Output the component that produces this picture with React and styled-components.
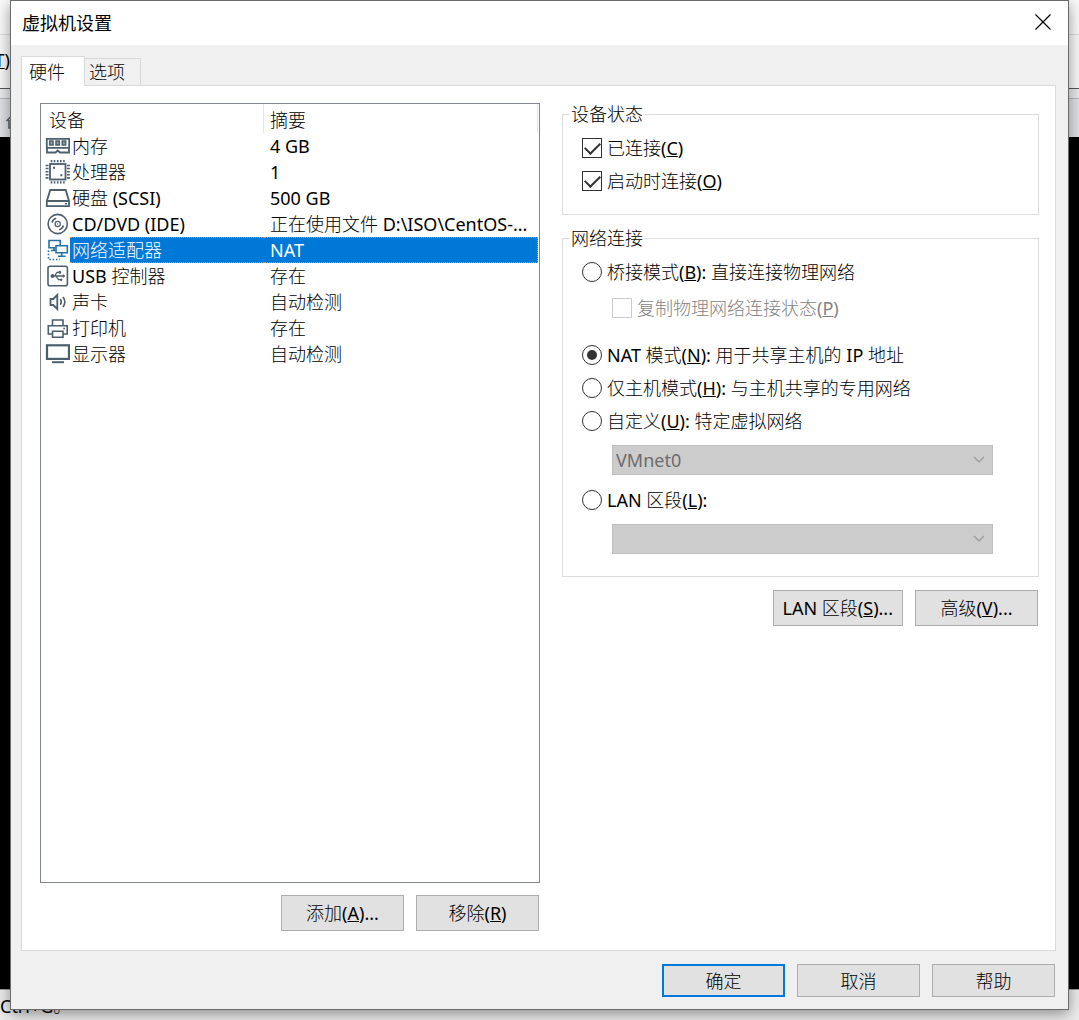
import { useState } from "react";
import styled, { createGlobalStyle, css } from "styled-components";

const GlobalStyle = createGlobalStyle`
  * {
    box-sizing: border-box;
  }

  body {
    margin: 0;
    font-family: "Noto Sans", "Noto Sans CJK SC Light", "Noto Sans CJK SC DemiLight", "Noto Sans CJK SC", sans-serif;
    font-size: 18px;
    line-height: 18px;
    color: #000000;
  }

  button, input, select {
    font: inherit;
    color: inherit;
    margin: 0;
  }
`;

const Desktop = styled.div`
  position: relative;
  min-height: 100vh;
  padding: 0 10px 10px;
  display: flex;
  overflow: hidden;
`;

/* host window that stays behind the dialog */
const HostWindow = styled.div`
  position: absolute;
  inset: 0;
  display: flex;
  flex-direction: column;
  background: #000000;
`;

const HostTitle = styled.div`
  height: 35px;
  background: #fafafa;
  border-bottom: 1px solid #dcdcdc;
`;

const HostMenu = styled.div`
  height: 54px;
  padding-bottom: 4px;
  display: flex;
  align-items: center;
  background: #f8f8f8;
  border-bottom: 1px solid #555555;
`;

const HostMenuItem = styled.span`
  width: 10px;
  display: flex;
  justify-content: flex-end;
`;

const HostToolbar = styled.div`
  height: 48px;
  background: #dfe1e4;

  svg {
    display: block;
    margin: 14px 0 0 5px;
  }

  &::before {
    content: "";
    display: block;
    height: 9px;
    background: #e9eaec;
    border-bottom: 1px solid #b4b6b9;
  }
`;

const HostScreen = styled.div`
  flex: 1;
  background: #000000;
`;

const HostStatus = styled.div`
  height: 31px;
  padding-top: 7px;
  background: #ececec;
  border-top: 1px solid #999999;
`;

const Dialog = styled.main`
  position: relative;
  flex: 1;
  min-width: 0;
  display: flex;
  flex-direction: column;
  background: #f0f0f0;
  border: 1px solid #6b6b6b;
  box-shadow: 0 4px 14px rgba(0, 0, 0, .4);
`;

const TitleBar = styled.header`
  height: 44px;
  padding: 0 13px 2px 11px;
  display: flex;
  align-items: center;
  justify-content: space-between;
  background: #ffffff;
`;

const Title = styled.h1`
  margin: 0;
  font-family: "Noto Sans CJK SC", sans-serif;
  font-size: 18px;
  font-weight: 400;
`;

const CloseButton = styled.button`
  width: 24px;
  height: 24px;
  padding: 0;
  display: flex;
  align-items: center;
  justify-content: center;
  border: none;
  background: none;
`;

const Content = styled.div`
  flex: 1;
  padding: 11px 12px 12px 10px;
  display: flex;
  flex-direction: column;
`;

const Tabs = styled.div`
  display: flex;
  align-items: flex-end;
`;

const Tab = styled.button`
  height: 27px;
  padding: 0 15px 0 4px;
  border: 1px solid #d9d9d9;
  border-bottom: none;
  border-left: none;
  background: #f0f0f0;

  ${({ $active }) => $active && css`
    position: relative;
    height: 30px;
    padding: 0 19px 0 7px;
    margin-bottom: -1px;
    border-left: 1px solid #d9d9d9;
    background: #ffffff;
  `}
`;

const Panel = styled.section`
  flex: 1;
  padding: 17px 16px 19px 18px;
  display: grid;
  grid-template-columns: minmax(0, 500fr) minmax(0, 477fr);
  gap: 22px;
  border: 1px solid #d9d9d9;
  background: #ffffff;
`;

const Column = styled.div`
  display: flex;
  flex-direction: column;
`;

const DeviceList = styled.div`
  flex: 1;
  padding-right: 1px;
  border: 1px solid #828790;
`;

const DeviceTable = styled.table`
  width: 100%;
  table-layout: fixed;
  border-collapse: separate;
  border-spacing: 0;
`;

const HeadCell = styled.th`
  height: 29px;
  padding: 2px 0 0 ${({ $first }) => $first ? "8px" : "6px"};
  text-align: left;
  font-weight: 400;
  border-right: 1px solid #e5e5e5;
`;

const IconCell = styled.td`
  height: 26px;
  padding: 0 0 0 4px;

  svg {
    display: block;
  }
`;

const Cell = styled.td`
  height: 26px;
  padding: 0 6px 0 ${({ $name }) => $name ? "2px" : "6px"};
  line-height: 24px;
  white-space: nowrap;
  overflow: hidden;
  text-overflow: ellipsis;

  ${({ $selected }) => $selected && css`
    color: #ffffff;
    background: #0078d7;
    border-top: 1px dotted #ff8728;
    border-bottom: 1px dotted #ff8728;

    &:last-child {
      border-right: 1px dotted #ff8728;
    }
  `}
`;

const Actions = styled.div`
  margin-top: ${({ $tight }) => $tight ? "13px" : "12px"};
  padding-right: 1px;
  display: flex;
  justify-content: flex-end;
  gap: 12px;
`;

const Button = styled.button`
  min-width: 123px;
  height: ${({ $low }) => $low ? "33px" : "36px"};
  padding: 0 9px;
  white-space: nowrap;
  border: ${({ $primary }) => $primary ? "2px solid #0078d7" : "1px solid #adadad"};
  background: #e1e1e1;
`;

const Group = styled.fieldset`
  min-width: 0;
  margin: ${({ $first }) => $first ? "2px" : "14px"} 0 0;
  padding: 0 6px ${({ $first }) => $first ? "17px" : "22px"};
  border: 1px solid #dcdcdc;
`;

const Legend = styled.legend`
  height: 18px;
  padding: 0 2px;
`;

const Options = styled.div`
  padding: 8px 39px 0 13px;
`;

const Option = styled.label`
  height: 33px;
  display: flex;
  align-items: center;
  gap: 5px;
  white-space: nowrap;
`;

const SubOption = styled(Option)`
  margin: 3px 0 14px 30px;
  color: #838383;
`;

const Checkbox = styled.input`
  appearance: none;
  flex: none;
  width: 20px;
  height: 20px;
  display: flex;
  justify-content: center;
  border: 1px solid #333333;
  background: #ffffff;

  &:checked::before {
    content: "";
    width: 7px;
    height: 13px;
    border: solid #333333;
    border-width: 0 2px 2px 0;
    transform: rotate(45deg);
  }

  &:disabled {
    border-color: #cccccc;
  }
`;

const Radio = styled.input`
  appearance: none;
  flex: none;
  width: 20px;
  height: 20px;
  display: grid;
  place-items: center;
  border: 1px solid #333333;
  border-radius: 50%;
  background: #ffffff;

  &:checked::before {
    content: "";
    width: 10px;
    height: 10px;
    border-radius: 50%;
    background: #333333;
  }
`;

const SelectBox = styled.div`
  position: relative;
  margin: 8px 0 8px 30px;

  &:last-child {
    margin-bottom: 0;
  }

  svg {
    position: absolute;
    right: 8px;
    top: 11px;
  }
`;

const Select = styled.select`
  appearance: none;
  display: block;
  width: 100%;
  height: 30px;
  padding: 0 3px;
  border: 1px solid #bfbfbf;
  border-radius: 0;
  background: #cccccc;
  color: #6d6d6d;
  opacity: 1;
`;

const Footer = styled.footer`
  padding: 13px 1px 0 0;
  display: flex;
  justify-content: flex-end;
  gap: 12px;
`;

const Icon = ({ children, color = "#4c5f6e" }) => (
  <svg width="25" height="26" viewBox="0 0 25 26" fill="none" stroke={color} strokeWidth="1.6" aria-hidden="true">
    {children}
  </svg>
);

const MemoryIcon = () => (
  <Icon>
    <path d="M1.8 5.8H24.2V14.8H1.8ZM2 14.8V19.5H10.5L12.7 17.5L15 19.5H24V14.8" strokeWidth="1.8" />
    <path d="M4.7 8H8V12H4.7ZM11 8H14.3V12H11ZM17.3 8H20.6V12H17.3Z" fill="#9aa5ae" />
  </Icon>
);

const CpuIcon = () => (
  <Icon>
    <rect x="5" y="5" width="15.5" height="15.5" strokeWidth="1.8" />
    <path d="M6.5 1V3.3M9.5 1V3.3M12.7 1V3.3M15.8 1V3.3M18.9 1V3.3M6.5 22.3V24.6M9.5 22.3V24.6M12.7 22.3V24.6M15.8 22.3V24.6M18.9 22.3V24.6" />
    <path d="M.6 6.5H3.5M.6 9.5H3.5M.6 12.7H3.5M.6 15.8H3.5M.6 18.9H3.5M22 6.5H24.9M22 9.5H24.9M22 12.7H24.9M22 15.8H24.9M22 18.9H24.9" />
    <path d="M8 8.8H10M15.3 16.2H17.3" strokeWidth="2" />
  </Icon>
);

const DiskIcon = () => (
  <Icon>
    <path d="M5.3 5H20.7L24 16V21.2H1.8V16ZM1.8 16H24" strokeWidth="1.8" />
    <path d="M20 18.7H22" />
  </Icon>
);

const CdIcon = () => (
  <Icon>
    <circle cx="12.7" cy="13" r="9.6" />
    <circle cx="12.7" cy="13" r="2.6" strokeWidth="1.2" />
    <circle cx="12.7" cy="13" r=".3" strokeWidth="1" />
    <path d="M7 11.5A6 6 0 0 1 11.2 7.3M18.4 14.5A6 6 0 0 1 14.2 18.7" />
  </Icon>
);

const NetworkIcon = () => (
  <Icon color="#2472a8">
    <path d="M10.5 10.8H4V3.5H15.2V8.5M6 13.5H10.5M9 10.8V13.5" />
    <path d="M11 8.8H22.3V15.8H11ZM16.7 15.8V19M12.8 19.2H20.6" />
    <path d="M3.5 13.5V22.5H15" strokeDasharray="1.5 1.8" />
  </Icon>
);

const UsbIcon = () => (
  <Icon>
    <rect x="3" y="3.3" width="19.4" height="19.4" rx="2" />
    <path d="M7 13H18.5M9.5 13L12 9.3H14.5M11 13L13.5 16.7H16" strokeWidth="1.3" />
    <circle cx="7.5" cy="13" r="1.2" fill="#4c5f6e" />
    <circle cx="14.8" cy="9.3" r=".7" fill="#4c5f6e" />
    <path d="M15.5 16H17V17.4H15.5ZM18 11.7L20 13L18 14.3Z" fill="#4c5f6e" strokeWidth=".7" />
  </Icon>
);

const SoundIcon = () => (
  <Icon>
    <path d="M5.5 10H8.3L12.3 6V20L8.3 16H5.5Z" strokeWidth="1.8" />
    <path d="M15.3 10.3Q17.3 13 15.3 15.7M18 8Q21.7 13 18 18" />
  </Icon>
);

const PrinterIcon = () => (
  <Icon>
    <path d="M7.5 10.5V5H18V10.5M7.5 19H3.3V10.7H22.2V19H18" />
    <path d="M7.5 16.3H18V22.3H7.5ZM18.3 13.5H20" />
  </Icon>
);

const DisplayIcon = () => (
  <Icon>
    <rect x="2" y="4.3" width="22" height="13.6" strokeWidth="2.2" />
    <path d="M7 21.2H19" strokeWidth="2" />
  </Icon>
);

const Chevron = () => (
  <svg width="12" height="8" viewBox="0 0 12 8" fill="none" stroke="#999999" strokeWidth="1.2" aria-hidden="true">
    <path d="M1 1L6 6L11 1" />
  </svg>
);

const devices = [
  { name: "内存", summary: "4 GB", icon: MemoryIcon },
  { name: "处理器", summary: "1", icon: CpuIcon },
  { name: "硬盘 (SCSI)", summary: "500 GB", icon: DiskIcon },
  { name: "CD/DVD (IDE)", summary: "正在使用文件 D:\\ISO\\CentOS-...", icon: CdIcon },
  { name: "网络适配器", summary: "NAT", icon: NetworkIcon },
  { name: "USB 控制器", summary: "存在", icon: UsbIcon },
  { name: "声卡", summary: "自动检测", icon: SoundIcon },
  { name: "打印机", summary: "存在", icon: PrinterIcon },
  { name: "显示器", summary: "自动检测", icon: DisplayIcon },
];

const App = () => {
  const [selected, setSelected] = useState("网络适配器");
  const [mode, setMode] = useState("nat");

  const modeProps = (value) => ({
    type: "radio",
    name: "mode",
    checked: mode === value,
    onChange: () => setMode(value),
  });

  return (
    <Desktop>
      <GlobalStyle />
      <HostWindow aria-hidden="true">
        <HostTitle />
        <HostMenu>
          <HostMenuItem><u>T</u>)</HostMenuItem>
        </HostMenu>
        <HostToolbar>
          <svg width="16" height="16" viewBox="0 0 16 16" fill="none" stroke="#4c5f6e" strokeWidth="1.5">
            <path d="M1.5 8L8 1.5L14.5 8M4 7V15H12V7" />
          </svg>
        </HostToolbar>
        <HostScreen />
        <HostStatus>Ctrl+G。</HostStatus>
      </HostWindow>

      <Dialog>
        <TitleBar>
          <Title>虚拟机设置</Title>
          <CloseButton aria-label="关闭">
            <svg width="16" height="16" viewBox="0 0 16 16" stroke="#000000" strokeWidth="1.2">
              <path d="M.5 .5L15.5 15.5M15.5 .5L.5 15.5" />
            </svg>
          </CloseButton>
        </TitleBar>

        <Content>
          <Tabs role="tablist">
            <Tab role="tab" aria-selected="true" $active>硬件</Tab>
            <Tab role="tab" aria-selected="false">选项</Tab>
          </Tabs>

          <Panel>
            <Column>
              <DeviceList>
                <DeviceTable>
                  <colgroup>
                    <col style={{ width: 29 }} />
                    <col style={{ width: 194 }} />
                    <col />
                  </colgroup>
                  <thead>
                    <tr>
                      <HeadCell colSpan={2} $first>设备</HeadCell>
                      <HeadCell>摘要</HeadCell>
                    </tr>
                  </thead>
                  <tbody>
                    {devices.map(({ name, summary, icon: DeviceIcon }) => (
                      <tr key={name} onClick={() => setSelected(name)}>
                        <IconCell><DeviceIcon /></IconCell>
                        <Cell $name $selected={selected === name}>{name}</Cell>
                        <Cell $selected={selected === name}>{summary}</Cell>
                      </tr>
                    ))}
                  </tbody>
                </DeviceTable>
              </DeviceList>
              <Actions>
                <Button>添加(<u>A</u>)...</Button>
                <Button>移除(<u>R</u>)</Button>
              </Actions>
            </Column>

            <Column>
              <Group $first>
                <Legend>设备状态</Legend>
                <Options>
                  <Option>
                    <Checkbox type="checkbox" defaultChecked />
                    <span>已连接(<u>C</u>)</span>
                  </Option>
                  <Option>
                    <Checkbox type="checkbox" defaultChecked />
                    <span>启动时连接(<u>O</u>)</span>
                  </Option>
                </Options>
              </Group>

              <Group>
                <Legend>网络连接</Legend>
                <Options>
                  <Option>
                    <Radio {...modeProps("bridged")} />
                    <span>桥接模式(<u>B</u>): 直接连接物理网络</span>
                  </Option>
                  <SubOption>
                    <Checkbox type="checkbox" disabled />
                    <span>复制物理网络连接状态(<u>P</u>)</span>
                  </SubOption>
                  <Option>
                    <Radio {...modeProps("nat")} />
                    <span>NAT 模式(<u>N</u>): 用于共享主机的 IP 地址</span>
                  </Option>
                  <Option>
                    <Radio {...modeProps("host")} />
                    <span>仅主机模式(<u>H</u>): 与主机共享的专用网络</span>
                  </Option>
                  <Option>
                    <Radio {...modeProps("custom")} />
                    <span>自定义(<u>U</u>): 特定虚拟网络</span>
                  </Option>
                  <SelectBox>
                    <Select aria-label="特定虚拟网络" disabled>
                      <option>VMnet0</option>
                    </Select>
                    <Chevron />
                  </SelectBox>
                  <Option>
                    <Radio {...modeProps("lan")} />
                    <span>LAN 区段(<u>L</u>):</span>
                  </Option>
                  <SelectBox>
                    <Select aria-label="LAN 区段" disabled />
                    <Chevron />
                  </SelectBox>
                </Options>
              </Group>

              <Actions $tight>
                <Button>LAN 区段(<u>S</u>)...</Button>
                <Button>高级(<u>V</u>)...</Button>
              </Actions>
            </Column>
          </Panel>

          <Footer>
            <Button $low $primary>确定</Button>
            <Button $low>取消</Button>
            <Button $low>帮助</Button>
          </Footer>
        </Content>
      </Dialog>
    </Desktop>
  );
};

export default App;
